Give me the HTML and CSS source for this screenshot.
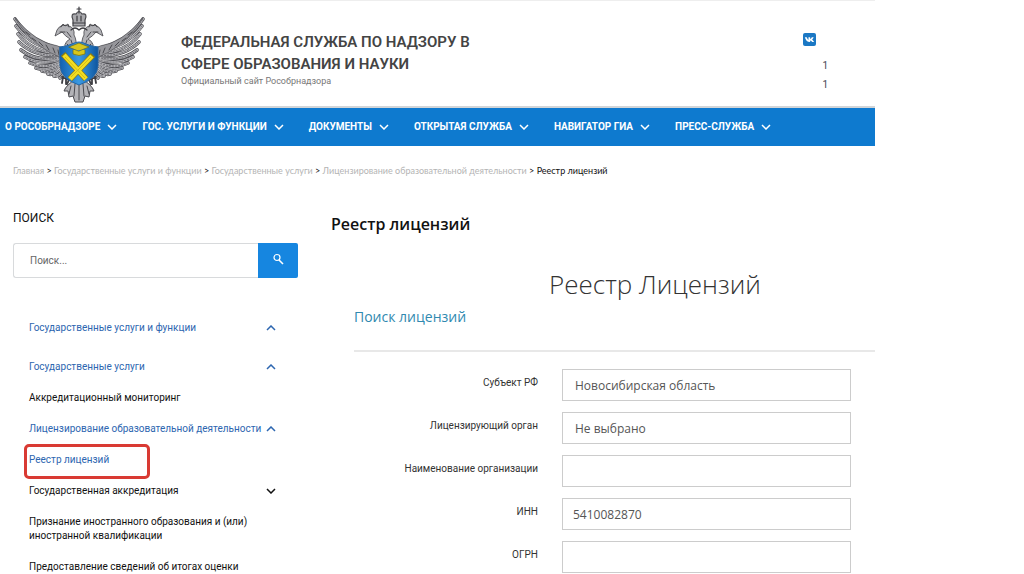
FILE: index.html
```html
<!DOCTYPE html>
<html lang="ru">

<head>
	<meta charset="UTF-8">
	<meta name="viewport" content="width=device-width, initial-scale=1.0">
	<title>Реестр лицензий</title>
	<link rel="stylesheet" href="styles.css">
</head>

<body>
	<!-- общие иконки -->
	<svg class="sprite" aria-hidden="true">
		<symbol id="down" viewBox="0 0 10 6">
			<path d="M1 1l4 4 4-4" fill="none" stroke="currentColor" stroke-width="1.5" />
		</symbol>
		<symbol id="up" viewBox="0 0 10 6">
			<path d="M1 5l4-4 4 4" fill="none" stroke="currentColor" stroke-width="1.5" />
		</symbol>
	</svg>

	<div class="page">
		<header class="header">
			<svg class="emblem" viewBox="12 4 134 100" aria-hidden="true">
				<defs>
					<linearGradient id="shield" x1="0" x2="1">
						<stop offset="0" stop-color="#1261b0" />
						<stop offset=".5" stop-color="#3a9ae2" />
						<stop offset="1" stop-color="#0d559f" />
					</linearGradient>
					<path id="feathers" d="M64 48Q32 43 15 18M63 50Q33 48 16 25M63 52Q33 53 18 33M63 54Q35 57 19 41M63 56Q37 62 21 49M63 58Q41 65 25 56M63 60Q44 69 30 62M63 62Q48 71 36 67M63 64Q52 73 42 70M63 65Q55 75 48 73M64 66Q60 76 54 75M66 66Q64 75 60 77" />
					<g id="half">
						<use href="#feathers" stroke="#4e4e53" stroke-width="3.6" />
						<use href="#feathers" stroke="#bcbcc0" stroke-width="2.2" />
						<use href="#feathers" stroke="#5c5c62" stroke-width=".9" stroke-dasharray="1.5 1.5" />
						<path d="M15 17Q36 42 58 45L65 50L62 57Q38 48 22 27Z" fill="#96969b" stroke="#4e4e53" stroke-width=".6" />
						<path d="M26 31l4 3M32 37l4 3M39 41l4 4M46 44l3 5M53 47l2 5M58 49l1 5" stroke="#4b4b50" stroke-width="1" />
						<path d="M66 51Q62 42 70 38Q65 35 62 31L55 35L57 29Q61 22 69 25Q75 27 74 34Q77 39 76 48Z" fill="#b2b2b6" stroke="#45454a" stroke-width=".8" />
						<path d="M61 26l2-3 2 2 3-2 1 3M60 31h5M67 31l4 5M71 39l2 6M67 43l3 3" stroke="#3d3d42" stroke-width=".9" />
						<path d="M63 76l-1 6M66 77l0 6M69 79l-2 4M62 76l7 3" stroke="#3f3f44" stroke-width="1.8" />
					</g>
				</defs>
				<g fill="none" stroke-linecap="round">
					<use href="#half" />
					<use href="#half" transform="translate(158 0) scale(-1 1)" />
					<g fill="#b3b3b7" stroke="#4a4a4f" stroke-width="1">
						<path d="M76 78Q66 84 64 90L68 90L69 96L73 95L75 101H83L85 95L89 96L90 90L94 90Q92 84 82 78Z" />
						<path d="M71 85l-2 8M75 83l-1 12M79 81v18M83 83l1 12M87 85l2 8" />
					</g>
					<path d="M73 25V19Q70 12 76 13Q79 8 82 13Q88 12 85 19V25Z" fill="#a9a9ad" stroke="#45454a" stroke-width="1.2" />
					<path d="M79 6v6M77 8h4M73 22h12M77 15v5M81 15v5M71 29q4-4 8 0q4-4 8 0" stroke="#3d3d42" stroke-width="1.2" />
					<path d="M60 46Q68 45 72 43Q79 39 86 43Q90 45 98 46V65Q97 78 79 84Q61 78 60 65Z" fill="url(#shield)" stroke="#2565a3" stroke-width="1" />
					<g stroke-linecap="butt">
						<path d="M63 53l23 25M93 54L70 78" stroke="#8c7c10" stroke-width="6" />
						<path d="M64 54l22 24M92 55L70 78" stroke="#f3de22" stroke-width="4.6" />
						<path d="M65 56l20 21M71 76L91 56" stroke="#c9b41a" stroke-width=".8" />
					</g>
					<path d="M69 46l10-4 10 4-10 4zM73 49v4q6 3 12 0v-4" fill="#d8c71b" stroke="#6d6a18" stroke-width=".7" />
				</g>
			</svg>
			<div class="brand">
				<div class="brand-name">Федеральная служба по надзору в<br>сфере образования и науки</div>
				<div class="brand-note">Официальный сайт Рособрнадзора</div>
			</div>
			<div class="contacts">
				<a class="vk" href="#" aria-label="ВКонтакте">
					<svg viewBox="0 0 14 14" aria-hidden="true">
						<path d="M2 4.500h2q.8 2.500 1.900 3v-3h1.800v2q1-.2 1.800-2h2q-.6 1.500-1.700 2.400Q11.200 8 12 9.800H10Q9 8.300 7.700 8v1.800Q3.500 10 2 4.500z" fill="#fff" />
					</svg>
				</a>
				<span class="phone">1</span>
				<span class="phone">1</span>
			</div>
		</header>

		<nav class="nav">
			<a href="#">О Рособрнадзоре <svg class="arrow"><use href="#down" /></svg></a>
			<a href="#">Гос. услуги и функции <svg class="arrow"><use href="#down" /></svg></a>
			<a href="#">Документы <svg class="arrow"><use href="#down" /></svg></a>
			<a href="#">Открытая служба <svg class="arrow"><use href="#down" /></svg></a>
			<a href="#">Навигатор ГИА <svg class="arrow"><use href="#down" /></svg></a>
			<a href="#">Пресс-служба <svg class="arrow"><use href="#down" /></svg></a>
		</nav>

		<div class="crumbs">
			<a href="#">Главная</a> &gt; <a href="#">Государственные услуги и функции</a> &gt; <a href="#">Государственные услуги</a> &gt; <a href="#">Лицензирование образовательной деятельности</a> &gt; <span>Реестр лицензий</span>
		</div>

		<div class="content">
			<aside class="sidebar">
				<label class="search-title" for="search">ПОИСК</label>
				<form class="search">
					<input id="search" type="text" placeholder="Поиск...">
					<button type="button" aria-label="Найти">
						<svg viewBox="0 0 12 12" aria-hidden="true">
							<circle cx="5" cy="4.500" r="3" fill="none" stroke="#fff" stroke-width="1.200" />
							<path d="M7 7l4 4" stroke="#fff" stroke-width="1.600" />
						</svg>
					</button>
				</form>
				<ul class="menu">
					<li class="open first"><a href="#">Государственные услуги и функции</a><svg class="arrow"><use href="#up" /></svg></li>
					<li class="open"><a href="#">Государственные услуги</a><svg class="arrow"><use href="#up" /></svg></li>
					<li><a href="#">Аккредитационный мониторинг</a></li>
					<li class="open"><a href="#">Лицензирование образовательной деятельности</a><svg class="arrow"><use href="#up" /></svg></li>
					<li class="open marked"><a href="#">Реестр лицензий</a></li>
					<li><a href="#">Государственная аккредитация</a><svg class="arrow"><use href="#down" /></svg></li>
					<li><a href="#">Признание иностранного образования и (или) иностранной квалификации</a></li>
					<li><a href="#">Предоставление сведений об итогах оценки</a></li>
				</ul>
			</aside>

			<main class="main">
				<h1>Реестр лицензий</h1>
				<h2>Реестр Лицензий</h2>
				<h3>Поиск лицензий</h3>
				<form class="form">
					<label for="region">Субъект РФ</label>
					<select id="region"><option>Новосибирская область</option></select>
					<label for="organ">Лицензирующий орган</label>
					<select id="organ"><option>Не выбрано</option></select>
					<label for="name">Наименование организации</label>
					<input id="name" type="text">
					<label for="inn">ИНН</label>
					<input id="inn" type="text" value="5410082870">
					<label for="ogrn">ОГРН</label>
					<input id="ogrn" type="text">
				</form>
			</main>
		</div>
	</div>
</body>

</html>
```
FILE: styles.css
```css
*,
*::before {
	box-sizing: border-box;
}

body {
	margin: 0;
	background: #fff;
	color: #111;
	font-family: Roboto, "Noto Sans", sans-serif;
	font-size: 10px;
	line-height: 14px;
}

a {
	color: inherit;
	text-decoration: none;
}

.sprite {
	display: none;
}

.page {
	max-width: 875px;
	overflow: hidden;
}

.arrow {
	flex: none;
	width: 10px;
	height: 6px;
}

/* шапка */
.header {
	display: flex;
	align-items: flex-start;
	height: 108px;
	padding: 4px 47px 0 12px;
	border-top: 1px solid #eee;
	border-bottom: 2px solid #d2d5d8;
}

.emblem {
	width: 134px;
	height: 100px;
}

.brand {
	margin: 26px auto 0 35px;
}

.brand-name {
	color: #444;
	font-size: 15px;
	font-weight: 600;
	line-height: 22px;
	text-transform: uppercase;
}

.brand-note {
	color: #777;
	font-size: 9px;
	line-height: 12px;
}

.contacts {
	display: flex;
	flex-direction: column;
	width: 25px;
	padding-top: 28px;
}

.vk {
	width: 13px;
	height: 13px;
	margin-bottom: 10px;
	border-radius: 2px;
	background: #1b78c4;
}

.vk svg {
	display: block;
}

.phone {
	align-self: flex-end;
	color: #445;
	line-height: 19px;
}

/* главное меню */
.nav {
	display: flex;
	align-items: center;
	gap: 25px;
	height: 38px;
	padding-left: 5px;
	background: #0e7acf;
	color: #fff;
	font-weight: 700;
	text-transform: uppercase;
	white-space: nowrap;
}

.nav a {
	display: flex;
	align-items: center;
	gap: 7px;
}

.crumbs {
	padding: 18px 13px 0;
	font-family: Lato, "Noto Sans", sans-serif;
	font-size: 9px;
	white-space: nowrap;
}

.crumbs a {
	color: #b4b4b4;
}

.content {
	display: flex;
	gap: 33px;
	padding: 32px 0 0 13px;
}

/* левая колонка */
.sidebar {
	flex: none;
	width: 285px;
}

.search-title {
	display: block;
	font-size: 12px;
	line-height: 16px;
}

.search {
	display: flex;
	height: 35px;
	margin-top: 17px;
}

.search input {
	flex: 1;
	min-width: 0;
	padding: 0 16px;
	border: 1px solid #d8dadc;
	border-right: 0;
	border-radius: 3px 0 0 3px;
	font: inherit;
}

.search input::placeholder {
	color: #666;
}

.search button {
	width: 40px;
	padding: 0;
	border: 0;
	border-radius: 0 2px 2px 0;
	background: #1686e0;
}

.search svg {
	width: 12px;
	height: 12px;
}

.menu {
	display: flex;
	flex-direction: column;
	gap: 17px;
	margin: 43px 0 0;
	padding: 0 22px 0 16px;
	list-style: none;
}

.menu li {
	display: flex;
	align-items: center;
	justify-content: space-between;
	position: relative;
}

.menu .first {
	margin-bottom: 8px;
}

.menu .open {
	color: #2d66b0;
}

/* рамка вокруг выбранного пункта */
.marked::before {
	content: "";
	position: absolute;
	top: -9px;
	left: -5px;
	width: 126px;
	height: 35px;
	border: 3px solid #d93a33;
	border-radius: 5px;
}

/* реестр */
.main {
	flex: 1;
	min-width: 0;
	font-family: "Open Sans", "Noto Sans", sans-serif;
}

.main h1 {
	margin: 2px 0 0;
	font-size: 16px;
	font-weight: 600;
	line-height: 24px;
}

.main h2 {
	margin: 32px 0 0;
	padding-left: 104px;
	color: #333;
	font-size: 26px;
	font-weight: 300;
	line-height: 32px;
	text-align: center;
}

.main h3 {
	margin: 7px 0 0 23px;
	padding-bottom: 23px;
	border-bottom: 2px solid #e8e8e8;
	color: #3089b0;
	font-size: 14px;
	font-weight: 400;
	line-height: 20px;
}

.form {
	display: grid;
	grid-template-columns: 184px 1fr;
	gap: 11px 24px;
	margin: 17px 24px 0 23px;
}

.form label {
	padding-top: 7px;
	color: #333;
	font-family: Roboto, "Noto Sans", sans-serif;
	text-align: right;
}

.form input,
.form select {
	width: 100%;
	height: 32px;
	padding: 1px 10px 0;
	border: 1px solid #ccc;
	border-radius: 0;
	background: #fff;
	color: #555;
	font: inherit;
	font-size: 12px;
	appearance: none;
}

.form select {
	padding-left: 12px;
}
```
